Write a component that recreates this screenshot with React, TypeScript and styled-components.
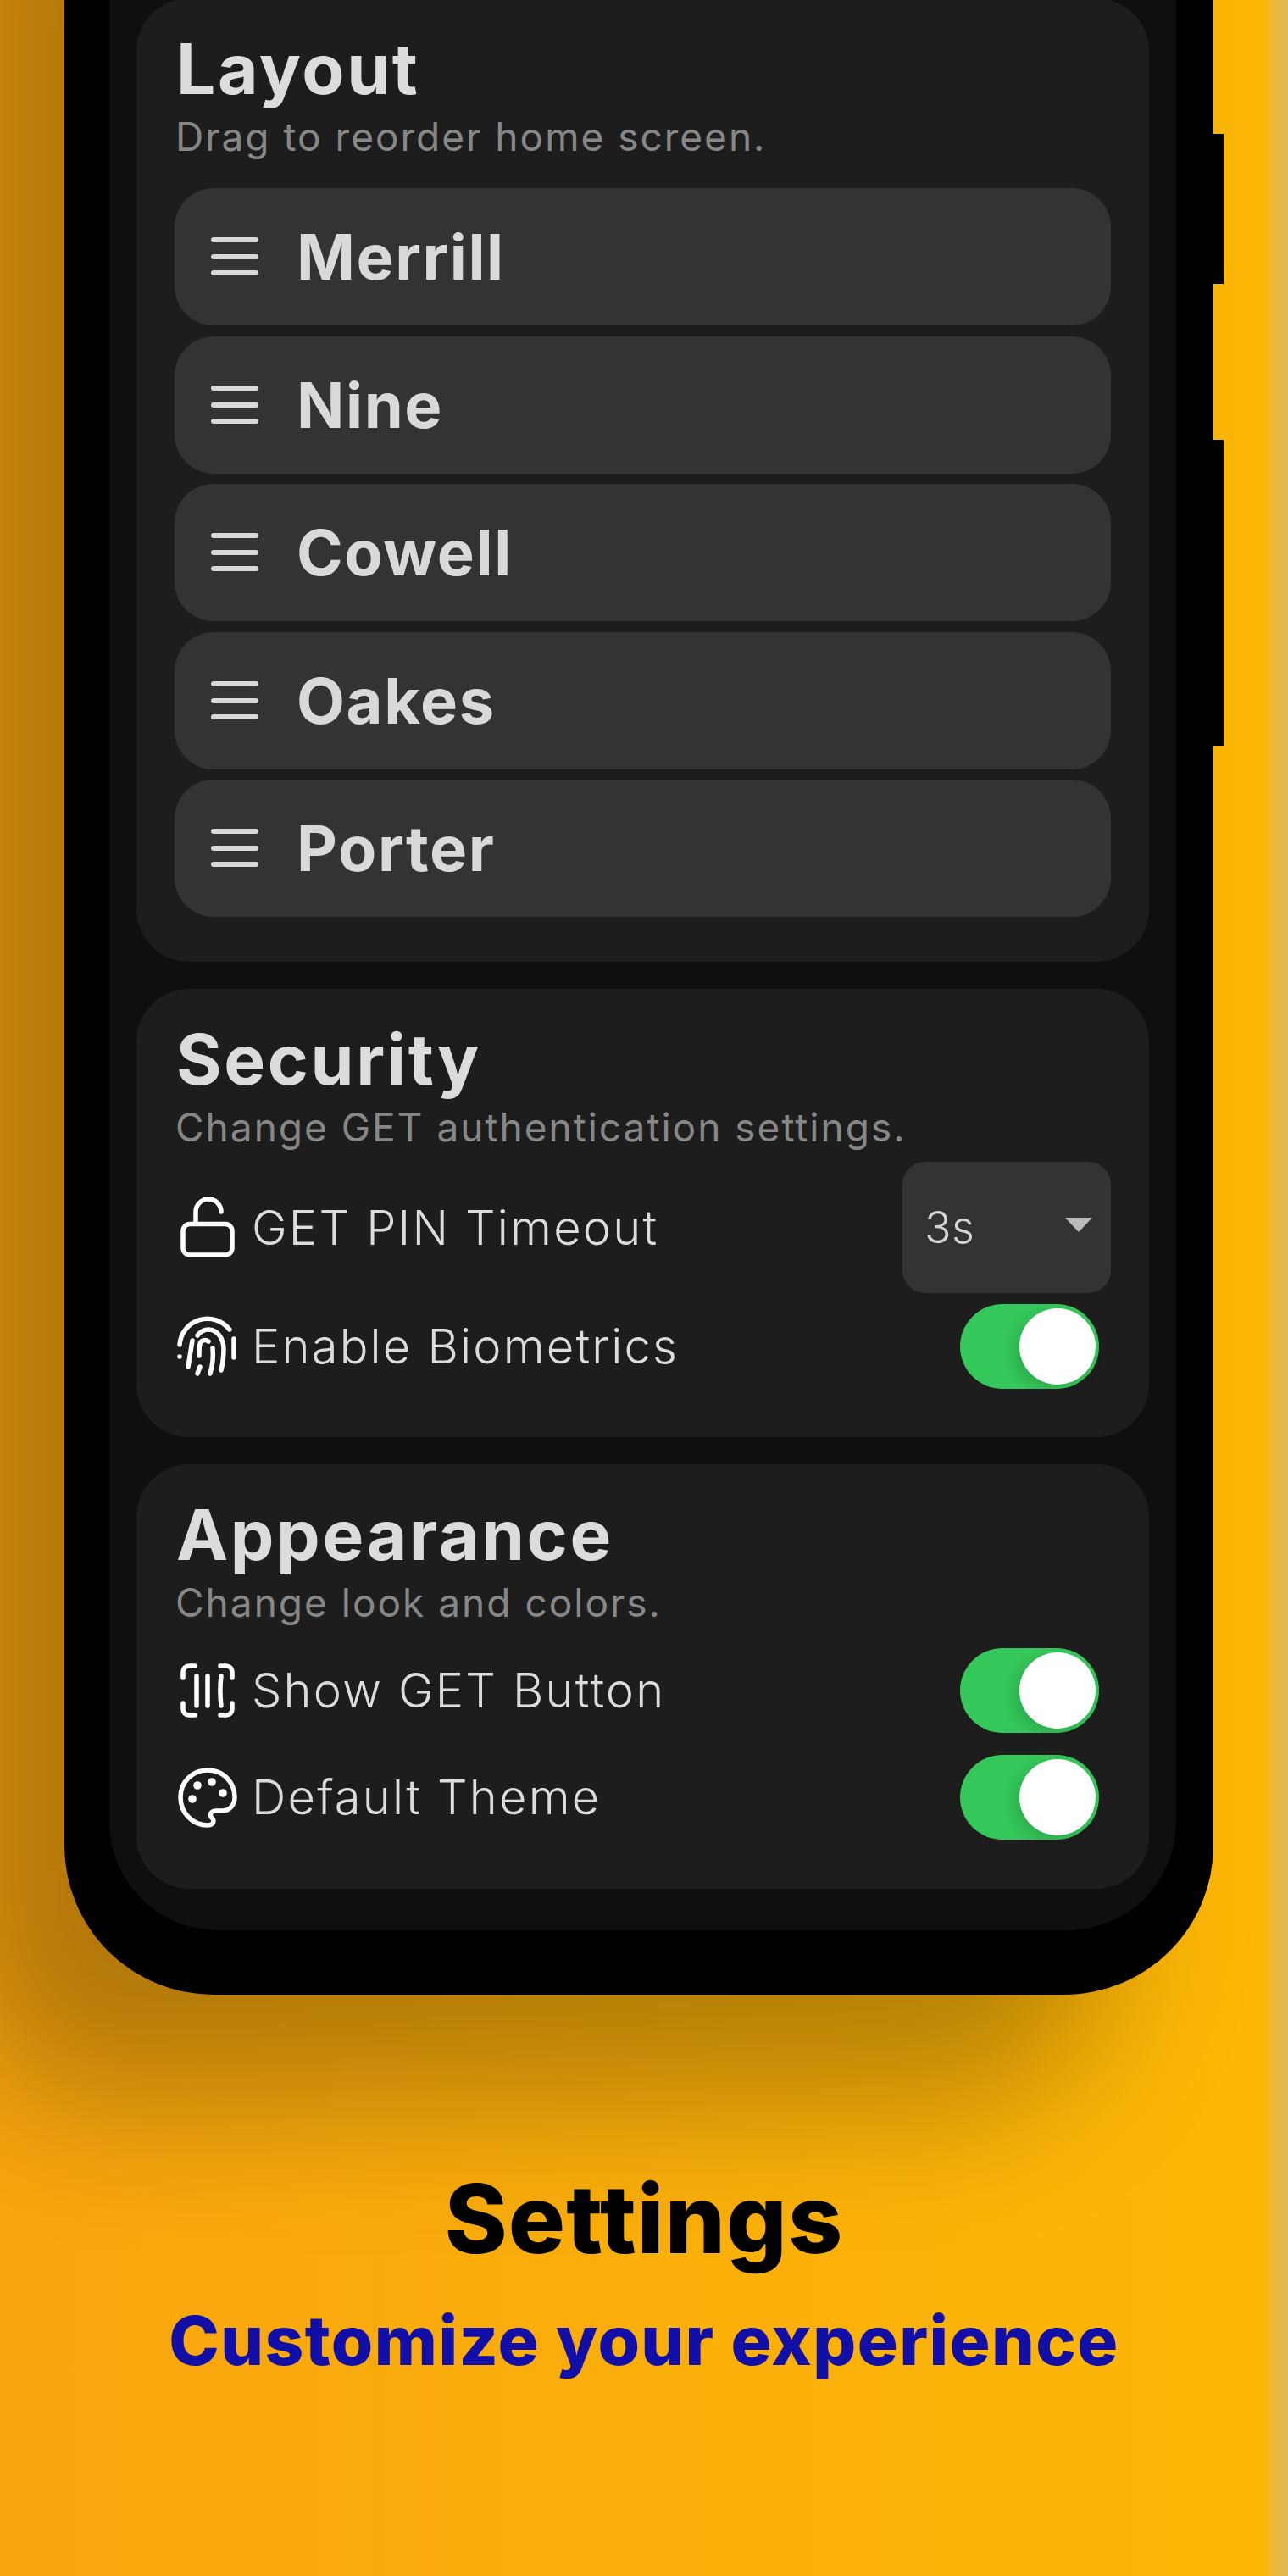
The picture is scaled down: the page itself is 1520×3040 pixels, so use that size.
import styled, { createGlobalStyle } from "styled-components";

const GlobalStyle = createGlobalStyle`
  html, body { margin: 0; padding: 0; }
  body { font-family: "Inter", "Liberation Sans", sans-serif; }
`;

const Page = styled.div`
  position: relative;
  width: 1520px;
  height: 3040px;
  overflow: hidden;
  display: flex;
  flex-direction: column;
  background: linear-gradient(90deg, #f8a50e 0%, #fdb806 100%);

  &::after {
    content: "";
    position: absolute;
    top: 0;
    right: 0;
    bottom: 0;
    width: 30px;
    background: linear-gradient(90deg, rgba(227, 184, 79, 0) 0%, rgba(227, 184, 79, 1) 68%);
  }
`;

const Phone = styled.div`
  position: relative;
  box-sizing: border-box;
  flex: none;
  width: 1356px;
  height: 2654px;
  margin: -300px 0 0 76px;
  padding: 0 44px 76px 53px;
  display: flex;
  background: #000;
  border-radius: 0 0 176px 176px;
  box-shadow: -130px 126px 170px 0 rgba(0, 0, 0, 0.28);
`;

const SideButton = styled.div<{ $top: number; $height: number }>`
  position: absolute;
  right: -12px;
  top: ${(p) => p.$top + 300}px;
  width: 12px;
  height: ${(p) => p.$height}px;
  background: #000;
`;

const Screen = styled.div`
  flex: 1;
  box-sizing: border-box;
  padding: 0 32px 49px;
  display: flex;
  flex-direction: column;
  justify-content: flex-end;
  gap: 32px;
  background: #0f0f0f;
  border-radius: 0 0 128px 128px;
`;

const Card = styled.section<{ $bottom: number }>`
  flex: none;
  padding: 0 45px ${(p) => p.$bottom}px;
  background: #1d1d1d;
  border-radius: 62px;
`;

const Title = styled.h2`
  margin: 0;
  padding: 33px 0 0 2px;
  font-size: 82px;
  line-height: 102px;
  font-weight: 700;
  letter-spacing: 2.6px;
  color: #dcdcdc;
`;

const Subtitle = styled.p<{ $after: number }>`
  margin: 0 0 ${(p) => p.$after}px;
  padding-left: 1px;
  font-size: 46px;
  line-height: 56px;
  letter-spacing: 2px;
  color: #878787;
`;

const OrderList = styled.div`
  display: flex;
  flex-direction: column;
  gap: 12.4px;
`;

const OrderRow = styled.div`
  height: 162px;
  box-sizing: border-box;
  padding-left: 43px;
  display: flex;
  align-items: center;
  gap: 45px;
  background: #333;
  border-radius: 46px;
  font-size: 74px;
  font-weight: 700;
  letter-spacing: 1.6px;
  color: #d9d9d9;
`;

const SettingRow = styled.div<{ $gap?: number }>`
  display: flex;
  align-items: center;
  justify-content: space-between;
  margin-top: ${(p) => p.$gap ?? 0}px;
  font-size: 56px;
  font-weight: 350;
  letter-spacing: 2.2px;
  color: #dcdcdc;
`;

const SettingLabel = styled.div`
  display: flex;
  align-items: center;
  gap: 16px;
  padding-left: 3px;
`;

const IconSlot = styled.span`
  width: 72px;
  display: flex;
  justify-content: center;
  align-items: center;
`;

const Select = styled.div`
  width: 246px;
  height: 155px;
  box-sizing: border-box;
  padding: 0 22px 0 26px;
  display: flex;
  align-items: center;
  justify-content: space-between;
  background: #333;
  border-radius: 27px;
  font-size: 52px;
  font-weight: 350;
  letter-spacing: 0.5px;
  color: #d4d4d4;
`;

const Caret = styled.span`
  width: 0;
  height: 0;
  border-left: 16px solid transparent;
  border-right: 16px solid transparent;
  border-top: 17px solid #bbb;
  margin-top: -6px;
`;

const Toggle = styled.div`
  width: 164px;
  height: 100px;
  margin-right: 14px;
  box-sizing: border-box;
  padding: 5px 4px;
  display: flex;
  justify-content: flex-end;
  background: #34c759;
  border-radius: 50px;
`;

const Thumb = styled.span`
  width: 90px;
  height: 90px;
  border-radius: 50%;
  background: #fff;
  box-shadow: -6px 6px 16px rgba(0, 0, 0, 0.14);
`;

const Caption = styled.div`
  flex: none;
  padding-top: 199px;
  text-align: center;
`;

const Headline = styled.h1`
  margin: 0;
  font-size: 112px;
  line-height: 130px;
  font-weight: 800;
  letter-spacing: 1.2px;
  color: #000;
`;

const Tagline = styled.p`
  margin: 29px 0 0;
  font-size: 80px;
  line-height: 100px;
  font-weight: 800;
  letter-spacing: 1.4px;
  color: #110fa8;
`;

const stroke = {
  fill: "none",
  stroke: "#fff",
  strokeWidth: 5.5,
  strokeLinecap: "round" as const,
  strokeLinejoin: "round" as const,
};

function Bars() {
  return (
    <svg width="56" height="46" viewBox="0 0 56 46" fill="none" stroke="#d9d9d9" strokeWidth="6" strokeLinecap="round">
      <path d="M3 3H53M3 23H53M3 42H53" />
    </svg>
  );
}

function LockIcon() {
  return (
    <svg width="64" height="71" viewBox="0 0 64 71" {...stroke}>
      <rect x="3" y="31.5" width="58" height="36.5" rx="8" />
      <path d="M18 31V17A15 15 0 0 1 48 17" />
    </svg>
  );
}

function FingerprintIcon() {
  return (
    <svg width="72" height="72" viewBox="0 0 72 72" {...stroke}>
      <path d="M3 34A33 33 0 0 1 62 16" />
      <path d="M67 27V49" />
      <path d="M13 60L18 29" />
      <path d="M24 23C28 18 32 16 37 16C46 16 54 24 55 38C55 47 54 56 52 64" />
      <path d="M26 47C26 40 26 36 27 33C28 29 33 27 37 30" />
      <path d="M42 38C43 48 42 58 39 68" />
      <path d="M27 60L24 68" />
      <circle cx="3" cy="48" r="2.800" fill="#fff" stroke="none" />
    </svg>
  );
}

function ScanIcon() {
  return (
    <svg width="64" height="64" viewBox="0 0 64 64" {...stroke}>
      <path d="M3 17V10A7 7 0 0 1 10 3H17" />
      <path d="M47 3H54A7 7 0 0 1 61 10V17" />
      <path d="M61 47V54A7 7 0 0 1 54 61H47" />
      <path d="M17 61H10A7 7 0 0 1 3 54V47" />
      <path d="M19 15V50M32 15V50M48 15C46.500 27 46.500 38 48 50" />
    </svg>
  );
}

function PaletteIcon() {
  return (
    <svg width="70" height="71" viewBox="0 0 70 71" {...stroke}>
      <path d="M35 3C17 3 3 17 3 35C3 53 17 68 35 68C39.500 68 42 66 42 62.500C42 60 40 60 39 58C37 54 40 51 45 51H52C61 51 67 44 67 35C67 17 53 3 35 3Z" />
      <g fill="#fff" stroke="none">
        <circle cx="23" cy="21" r="4.800" />
        <circle cx="40" cy="17" r="4.800" />
        <circle cx="53" cy="30" r="4.800" />
        <circle cx="17" cy="37" r="4.800" />
      </g>
    </svg>
  );
}

function Switch() {
  return (
    <Toggle>
      <Thumb />
    </Toggle>
  );
}

const order = ["Merrill", "Nine", "Cowell", "Oakes", "Porter"];

export default function App() {
  return (
    <Page>
      <GlobalStyle />
      <Phone>
        <SideButton $top={158} $height={177} />
        <SideButton $top={519} $height={361} />
        <Screen>
          <Card $bottom={53}>
            <Title>Layout</Title>
            <Subtitle $after={33}>Drag to reorder home screen.</Subtitle>
            <OrderList>
              {order.map((name) => (
                <OrderRow key={name}>
                  <Bars />
                  {name}
                </OrderRow>
              ))}
            </OrderList>
          </Card>
          <Card $bottom={57}>
            <Title>Security</Title>
            <Subtitle $after={13}>Change GET authentication settings.</Subtitle>
            <SettingRow>
              <SettingLabel>
                <IconSlot>
                  <LockIcon />
                </IconSlot>
                GET PIN Timeout
              </SettingLabel>
              <Select>
                3s
                <Caret />
              </Select>
            </SettingRow>
            <SettingRow $gap={13}>
              <SettingLabel>
                <IconSlot>
                  <FingerprintIcon />
                </IconSlot>
                Enable Biometrics
              </SettingLabel>
              <Switch />
            </SettingRow>
          </Card>
          <Card $bottom={58}>
            <Title>Appearance</Title>
            <Subtitle $after={26}>Change look and colors.</Subtitle>
            <SettingRow>
              <SettingLabel>
                <IconSlot>
                  <ScanIcon />
                </IconSlot>
                Show GET Button
              </SettingLabel>
              <Switch />
            </SettingRow>
            <SettingRow $gap={26}>
              <SettingLabel>
                <IconSlot>
                  <PaletteIcon />
                </IconSlot>
                Default Theme
              </SettingLabel>
              <Switch />
            </SettingRow>
          </Card>
        </Screen>
      </Phone>
      <Caption>
        <Headline>Settings</Headline>
        <Tagline>Customize your experience</Tagline>
      </Caption>
    </Page>
  );
}
